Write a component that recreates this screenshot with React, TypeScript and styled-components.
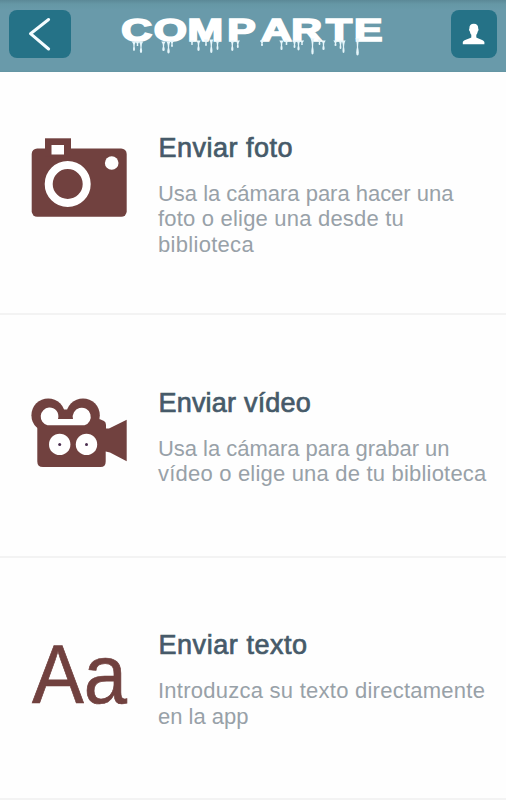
import React from 'react';
import styled, { createGlobalStyle } from 'styled-components';

const maroon = '#71413f';

const GlobalStyle = createGlobalStyle`
  *, *::before, *::after { box-sizing: border-box; }
  html, body { margin: 0; padding: 0; background: #fefefe; }
  body { font-family: "Liberation Sans", Arial, Helvetica, sans-serif; overflow: hidden; }
`;

const Screen = styled.div`
  display: flex;
  flex-direction: column;
  width: 506px;
  height: 800px;
  overflow: hidden;
  background: #fefefe;
`;

const Header = styled.header`
  display: flex;
  justify-content: space-between;
  align-items: flex-start;
  height: 72px;
  flex: none;
  padding: 10px 9px 0;
  background: linear-gradient(#5b8997 0, #6597a5 4px, #699aaa 10px, #699aaa 70px, #6294a2 72px);
`;

const HeaderButton = styled.button<{ $width: number }>`
  display: flex;
  width: ${({ $width }) => $width}px;
  height: 48px;
  padding: 0;
  border: 0;
  border-radius: 8px;
  background: #257287;
`;

const Logo = styled.svg`
  display: block;
  width: 270px;
  height: 50px;
  margin-left: 5px;
  margin-right: 21px;
`;

const List = styled.main`
  display: flex;
  flex-direction: column;
  padding-top: 1px;
`;

const Row = styled.section`
  display: flex;
  align-items: center;
  height: 242.3px;
  flex: none;
  padding: 3px 0 0 30px;
  border-bottom: 2px solid #f3f3f3;
`;

const RowContent = styled.div`
  display: flex;
  align-items: flex-start;
  gap: 28px;
`;

const Icon = styled.svg`
  display: block;
  flex: none;
  width: 100px;
  height: 84px;
  margin-top: 4px;
  overflow: visible;
`;

const Title = styled.h2<{ $spacing: number }>`
  margin: 0 0 17px;
  padding-left: 0.5px;
  font-size: 27px;
  line-height: 32px;
  font-weight: 400;
  letter-spacing: ${({ $spacing }) => $spacing}px;
  color: #465a69;
  -webkit-text-stroke: 0.7px #465a69;
`;

const Description = styled.p`
  margin: 0;
  font-size: 22px;
  line-height: 25.4px;
  color: #98a1a8;
`;

const Line = styled.span<{ $spacing: number }>`
  display: block;
  white-space: nowrap;
  letter-spacing: ${({ $spacing }) => $spacing}px;
`;

// Each drip: x, top, length, width of the drop at its end
const drips = [
  [134, 42, 9, 1.6], [137.5, 42, 4, 1], [141, 42, 11, 2.2],
  [163.5, 42, 9, 2.6], [168.5, 42, 11.5, 2.6], [172, 41, 6, 1.4],
  [192, 41, 4, 1.2], [198.5, 41, 10, 2.4], [206, 40, 6, 1.2], [211.3, 40, 13, 2.4], [217.5, 41, 9, 1.5],
  [232.3, 41, 10, 2.2], [237.8, 41, 7, 1.5],
  [262, 41, 5, 2], [281.5, 41, 9, 2], [286.5, 41, 4, 1.4],
  [294.5, 41, 7, 1.4], [298.5, 41, 9.5, 2.2], [302, 41, 4, 1],
  [312.5, 39, 15.5, 2.4], [319.5, 40, 5, 1.2], [323.5, 41, 9, 2.2],
  [335.5, 41, 5, 1.8], [340.5, 41, 8, 1.2], [343.5, 41, 12, 1.8],
  [357.5, 39, 16.5, 3],
];

const dripPath = ([x, y, length, w]: number[]) =>
  `M${x - 2.2} ${y - 0.5}Q${x - 0.8} ${y + 1} ${x - 0.6} ${y + length * 0.5}` +
  `Q${x - w / 2 - 0.8} ${y + length} ${x} ${y + length}` +
  `Q${x + w / 2 + 0.8} ${y + length} ${x + 0.6} ${y + length * 0.5}` +
  `Q${x + 0.8} ${y + 1} ${x + 2.2} ${y - 0.5}Z`;

const stretch = 1.4;
const letterStarts = [121.2, 153.8, 187.6, 227.3, 261, 291.3, 326, 354];

const Wordmark = () => (
  <Logo viewBox="118 10 270 50" aria-label="Comparte">
    <text
      x={letterStarts.map((x) => x / stretch).join(' ')}
      y="41.4"
      transform={`scale(${stretch} 1)`}
      fontFamily="Liberation Sans, Arial, sans-serif"
      fontSize="30.5"
      fontWeight="700"
      fill="#fff"
      stroke="#fff"
      strokeWidth="1.7"
    >
      COMPARTE
    </text>
    <path d={drips.map(dripPath).join('')} fill="#e6f6fb" />
  </Logo>
);

const CameraIcon = () => (
  <Icon viewBox="30 136 100 84">
    <g fill={maroon}>
      <rect x="31.7" y="148.5" width="95" height="68.3" rx="5.5" />
      <rect x="45" y="138.3" width="26" height="18" />
    </g>
    <rect x="51.5" y="145" width="12.5" height="9.5" fill="#fff" />
    <circle cx="67.7" cy="184" r="19" fill="none" stroke="#fff" strokeWidth="8" />
    <circle cx="111.7" cy="163" r="6.8" fill="#fff" />
  </Icon>
);

const VideoIcon = () => (
  <Icon viewBox="30 391 100 84">
    <g fill={maroon}>
      <circle cx="48.2" cy="415.2" r="16.8" />
      <circle cx="83" cy="415.2" r="16.8" />
      <path d="M62 409.5H69V425H62Z" />
      <path d="M37.3 422H96L99.5 419L104 421Q106 422 106 425V428.5H109L126.7 419.8V461.3L110 452.5L105.7 451.5V461.5Q105.7 467 100.5 467H43Q37.3 467 37.3 461.5Z" />
    </g>
    <path
      d="M49 407.6A8.7 8.7 0 0 1 58 418.9H73A9 9 0 1 1 84.5 425.3H47.5A9 9 0 0 1 49 407.6Z"
      fill="#fff"
    />
    <g fill="#fff">
      <circle cx="59.7" cy="444.4" r="10.7" />
      <circle cx="86.5" cy="444.4" r="10.7" />
    </g>
    <g fill="#4b2f50">
      <circle cx="59.7" cy="444.4" r="1.5" />
      <circle cx="86.5" cy="444.4" r="1.5" />
    </g>
  </Icon>
);

const TextIcon = () => (
  <Icon viewBox="30 633 100 84">
    <text
      x="32"
      y="703"
      fontFamily="Liberation Sans, Arial, sans-serif"
      fontSize="82.5"
      textLength="95"
      lengthAdjust="spacingAndGlyphs"
      fill={maroon}
      stroke={maroon}
      strokeWidth="0.7"
    >
      Aa
    </text>
  </Icon>
);

type Entry = {
  title: string;
  titleSpacing: number;
  icon: React.ReactNode;
  lines: { text: string; spacing: number }[];
};

const entries: Entry[] = [
  {
    title: 'Enviar foto',
    titleSpacing: 0.5,
    icon: <CameraIcon />,
    lines: [
      { text: 'Usa la cámara para hacer una', spacing: -0.02 },
      { text: 'foto o elige una desde tu', spacing: 0.2 },
      { text: 'biblioteca', spacing: 0.3 },
    ],
  },
  {
    title: 'Enviar vídeo',
    titleSpacing: 0.2,
    icon: <VideoIcon />,
    lines: [
      { text: 'Usa la cámara para grabar un', spacing: -0.03 },
      { text: 'vídeo o elige una de tu biblioteca', spacing: 0.2 },
    ],
  },
  {
    title: 'Enviar texto',
    titleSpacing: 0.55,
    icon: <TextIcon />,
    lines: [
      { text: 'Introduzca su texto directamente', spacing: 0.25 },
      { text: 'en la app', spacing: 0 },
    ],
  },
];

export default function App() {
  return (
    <Screen>
      <GlobalStyle />
      <Header>
        <HeaderButton $width={62} aria-label="Volver">
          <svg width="62" height="48" viewBox="9 10 62 48">
            <path d="M48.6 19.5L30.5 33.7L48.6 49" fill="none" stroke="#f4fcff" strokeWidth="3" strokeLinecap="round" strokeLinejoin="round" />
          </svg>
        </HeaderButton>
        <Wordmark />
        <HeaderButton $width={46} aria-label="Perfil">
          <svg width="46" height="48" viewBox="451 10 46 48">
            <path
              d="M473.8 23.8C476.8 23.8 478.4 25.5 478.2 28.5C478.9 29.3 478.4 31 477.7 31.5C477.5 33 477 34 476.3 34.8V37.4C478.8 39 483.5 39.4 484.4 42V44.3H462.8V42C463.7 39.4 468.8 39 471.3 37.4V34.8C470.6 34 470.1 33 469.9 31.5C469.2 31 468.7 29.3 469.4 28.5C469.2 25.5 470.8 23.8 473.8 23.8Z"
              fill="#fff"
            />
          </svg>
        </HeaderButton>
      </Header>
      <List>
        {entries.map(({ title, titleSpacing, icon, lines }) => (
          <Row key={title}>
            <RowContent>
              {icon}
              <div>
                <Title $spacing={titleSpacing}>{title}</Title>
                <Description>
                  {lines.map(({ text, spacing }) => (
                    <Line key={text} $spacing={spacing}>{text}</Line>
                  ))}
                </Description>
              </div>
            </RowContent>
          </Row>
        ))}
      </List>
    </Screen>
  );
}
